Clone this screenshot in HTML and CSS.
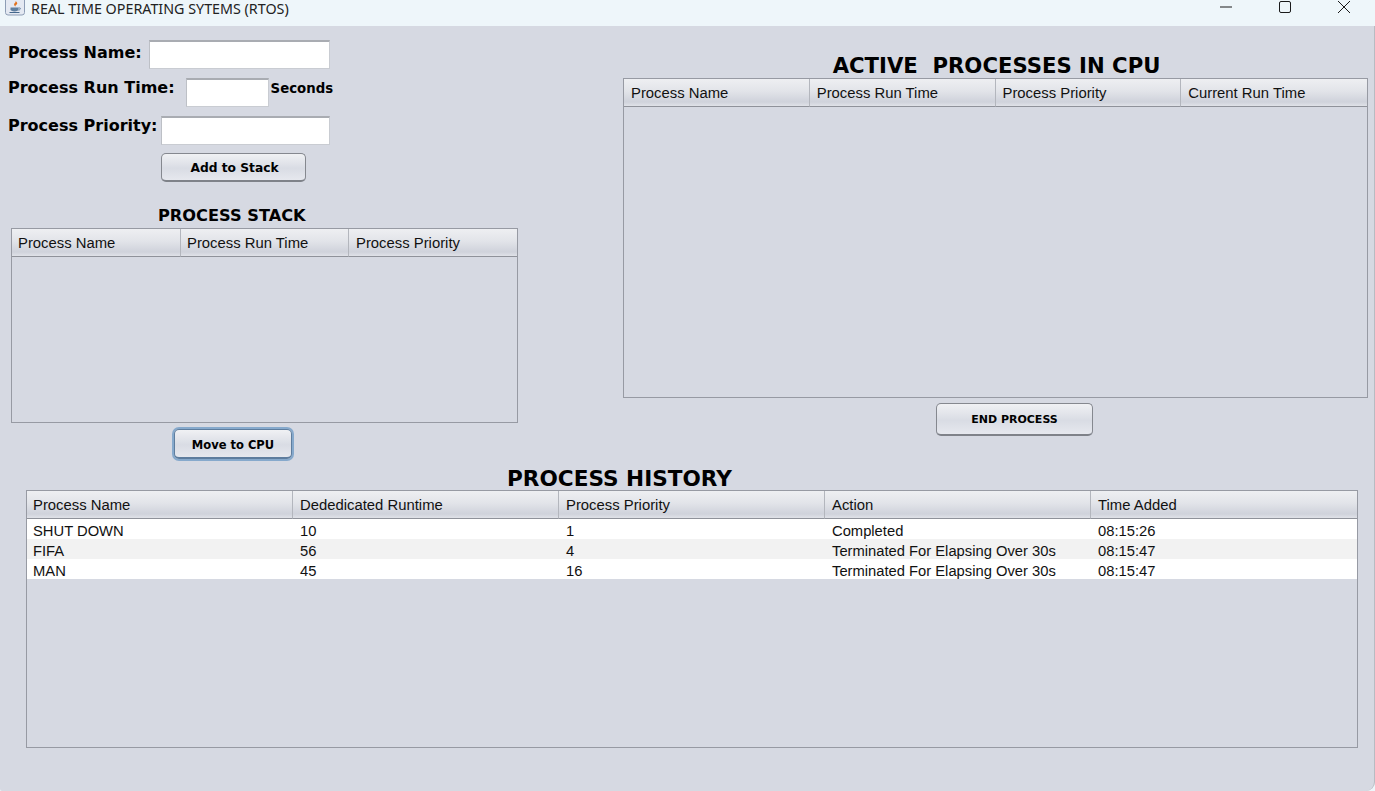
FILE: index.html
```html
<!DOCTYPE html>
<html lang="en">
<head>
    <meta charset="UTF-8">
    <meta name="viewport" content="width=device-width, initial-scale=1.0">
    <title>REAL TIME OPERATING SYTEMS (RTOS)</title>
    <link rel="stylesheet" href="styles.css">
</head>
<body>
    <div class="titlebar">
        <svg class="app-icon" width="20" height="20" viewBox="0 0 20 20">
            <rect x="0.5" y="0.5" width="19" height="18.500" rx="2.5" fill="#e4e9f2" stroke="#8d9db5"/>
            <path d="M10.500 5c.8 1.400-1.800 2.300-1.300 4 .2.700.8 1.200 1.300 1.500-.3-.9.200-1.300 1.200-2 1-.8.800-1.900-1.200-3.500z" fill="#e2711d"/>
            <path d="M5.500 11.500h8v1.800c0 1.300-1.500 2.200-4 2.200s-4-.9-4-2.200z" fill="#5f7f9f"/>
            <path d="M13.500 12h1.300c1 0 .8 1.800-1.300 2.200" fill="none" stroke="#5f7f9f"/>
            <path d="M4.500 16.500h10" stroke="#44688c"/>
        </svg>
        <span class="app-title">REAL TIME OPERATING SYTEMS (RTOS)</span>
        <div class="window-buttons">
            <svg width="14" height="14" viewBox="0 0 14 14"><path d="M1 7h12" stroke="#1a1a1a" fill="none"/></svg>
            <svg width="14" height="14" viewBox="0 0 14 14"><rect x="1.500" y="1.500" width="11" height="11" rx="1.500" stroke="#1a1a1a" fill="none"/></svg>
            <svg width="14" height="14" viewBox="0 0 14 14"><path d="M1 1l12 12M13 1L1 13" stroke="#1a1a1a" fill="none"/></svg>
        </div>
    </div>

    <div class="window">
        <div class="top">
            <div class="left">
                <div class="form-row">
                    <label class="field-label name-label" for="name">Process Name:</label>
                    <input class="field name-field" id="name" type="text">
                </div>
                <div class="form-row">
                    <label class="field-label" for="runtime">Process Run Time:</label>
                    <input class="field runtime-field" id="runtime" type="text">
                    <span class="seconds">Seconds</span>
                </div>
                <div class="form-row">
                    <label class="field-label" for="priority">Process Priority:</label>
                    <input class="field priority-field" id="priority" type="text">
                </div>
                <button class="btn add-btn">Add to Stack</button>

                <h3 class="stack-title">PROCESS STACK</h3>
                <div class="table-box stack-box">
                    <table>
                        <thead>
                            <tr><th>Process Name</th><th>Process Run Time</th><th>Process Priority</th></tr>
                        </thead>
                    </table>
                </div>
                <button class="btn move-btn">Move to CPU</button>
            </div>

            <div class="right">
                <h2 class="big-title cpu-title">ACTIVE&nbsp; PROCESSES IN CPU</h2>
                <div class="table-box cpu-box">
                    <table>
                        <thead>
                            <tr><th>Process Name</th><th>Process Run Time</th><th>Process Priority</th><th>Current Run Time</th></tr>
                        </thead>
                    </table>
                </div>
                <button class="btn end-btn">END PROCESS</button>
            </div>
        </div>

        <div class="history">
            <h2 class="big-title history-title">PROCESS HISTORY</h2>
            <div class="table-box history-box">
                <table>
                    <thead>
                        <tr><th>Process Name</th><th>Dededicated Runtime</th><th>Process Priority</th><th>Action</th><th>Time Added</th></tr>
                    </thead>
                    <tbody>
                        <tr><td>SHUT DOWN</td><td>10</td><td>1</td><td>Completed</td><td>08:15:26</td></tr>
                        <tr><td>FIFA</td><td>56</td><td>4</td><td>Terminated For Elapsing Over 30s</td><td>08:15:47</td></tr>
                        <tr><td>MAN</td><td>45</td><td>16</td><td>Terminated For Elapsing Over 30s</td><td>08:15:47</td></tr>
                    </tbody>
                </table>
            </div>
        </div>
    </div>
</body>
</html>
```

FILE: styles.css
```css
* {
    box-sizing: border-box;
}

html, body {
    margin: 0;
    padding: 0;
    height: 791px;
    overflow: hidden;
    background-color: #eef6fa;
}

.titlebar {
    height: 26px;
    display: flex;
    align-items: center;
    padding-left: 5px;
    background-color: #eef6fa;
}

.app-icon {
    align-self: flex-start;
    margin-top: -4px;
    margin-right: 6px;
}

.app-title {
    font-family: "Noto Sans", sans-serif;
    font-size: 14.300px;
    color: #222;
    margin-bottom: 10px;
}

.window-buttons {
    margin-left: auto;
    display: flex;
    gap: 45px;
    padding-right: 24px;
    margin-bottom: 13px;
}

.window {
    height: 765px;
    background-color: #d6d9e2;
    border-radius: 0 0 9px 2px;
    border-right: 1px solid #b8bbc2;
}

.top {
    display: flex;
    height: 439px;
}

.left {
    width: 623px;
    padding: 14px 0 0 8px;
}

.form-row {
    display: flex;
    height: 29px;
    margin-bottom: 9px;
}

.field-label {
    font-family: "DejaVu Sans", sans-serif;
    font-weight: bold;
    font-size: 16px;
    line-height: 20px;
    color: #000;
    white-space: nowrap;
}

.name-label {
    line-height: 26px;
}

.field {
    height: 29px;
    background-color: #fff;
    border: 1px solid #c9ccd2;
    border-top: 2px solid #a9acb2;
    border-left-color: #bdc0c6;
}

.name-field {
    width: 181px;
    margin-left: 7px;
}

.runtime-field {
    width: 83px;
    margin-left: 11px;
}

.priority-field {
    width: 169px;
    margin-left: 3px;
}

.seconds {
    font-family: "DejaVu Sans", sans-serif;
    font-weight: bold;
    font-size: 13.300px;
    line-height: 22px;
    margin-left: 2px;
}

.btn {
    display: block;
    font-family: "DejaVu Sans", sans-serif;
    font-weight: bold;
    font-size: 12.250px;
    color: #000;
    background: linear-gradient(#f0f1f4, #d9dce4 55%, #e6e8ee);
    border: 1px solid #85888f;
    border-bottom: 2px solid #7f8289;
    border-radius: 5px;
    padding: 0;
}

.add-btn {
    width: 145px;
    height: 29px;
    margin-left: 153px;
    margin-top: -1px;
    padding: 1px 0 0 2px;
}

.stack-title {
    font-family: "DejaVu Sans", sans-serif;
    font-size: 16.200px;
    font-weight: bold;
    line-height: 20px;
    margin: 24px 0 2px 150px;
}

.table-box {
    border: 1px solid #979aa3;
}

table {
    width: 100%;
    border-collapse: separate;
    border-spacing: 0;
    table-layout: fixed;
    font-family: "Liberation Sans", sans-serif;
    font-size: 14.850px;
    color: #111;
}

th {
    height: 28px;
    padding: 0 0 0 6px;
    font-weight: normal;
    text-align: left;
    background: linear-gradient(#eeeff2, #e2e4e9 45%, #cfd2db 85%, #e0e2e8);
    border-right: 1px solid #b3b6bd;
    border-bottom: 1px solid #8f929a;
}

th:last-child {
    border-right: none;
}

td {
    height: 20px;
    padding: 4px 0 0 6px;
    font-size: 14.750px;
    line-height: 16px;
    background-color: #fff;
    white-space: nowrap;
}

tbody tr:nth-child(even) td {
    background-color: #f2f2f2;
}

.stack-box {
    width: 507px;
    height: 195px;
    margin-left: 3px;
}

.stack-box th:first-child {
    width: 169px;
}

.stack-box th:last-child {
    padding-left: 7px;
}

.move-btn {
    width: 118px;
    height: 30px;
    margin: 6px 0 0 166px;
    padding-top: 2px;
    font-size: 11.500px;
    box-shadow: 0 0 0 2px #86a9cc;
    border-color: #5e7d9e;
}

.right {
    flex: 1;
    padding-top: 27px;
}

.big-title {
    font-family: "DejaVu Sans", sans-serif;
    font-weight: bold;
    font-size: 21.200px;
    line-height: 25px;
    margin: 0;
    text-align: center;
    color: #000;
}

.cpu-title {
    padding-right: 4px;
}

.cpu-box {
    width: 745px;
    height: 320px;
}

.cpu-box th {
    padding-left: 7px;
}

.end-btn {
    width: 157px;
    height: 33px;
    margin: 5px 0 0 313px;
    font-size: 11px;
}

.history {
    padding-left: 26px;
}

.history-title {
    width: 1187px;
    font-size: 21.600px;
    line-height: 23px;
    padding-top: 2px;
}

.history-box {
    width: 1332px;
    height: 258px;
}

.history-box th + th,
.history-box td + td {
    padding-left: 7px;
}
```
